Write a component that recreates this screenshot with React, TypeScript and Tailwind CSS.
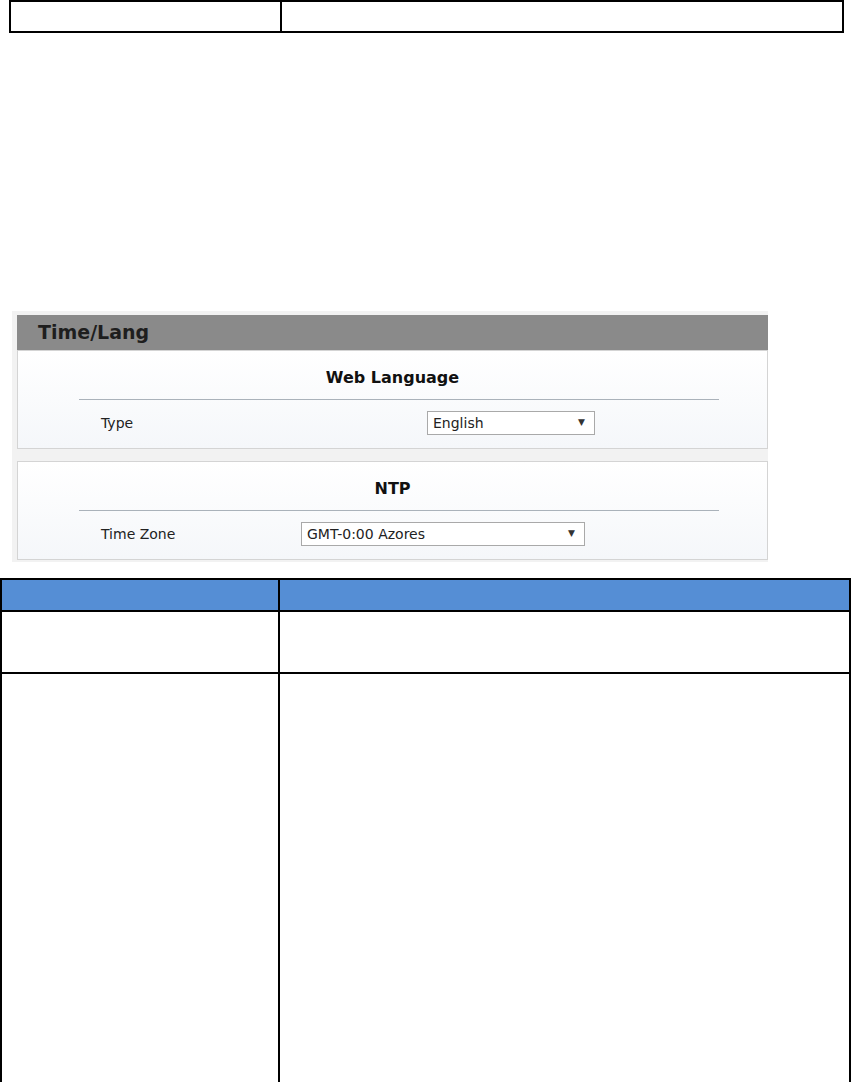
import React from "react";

function Select({ value, width }: { value: string; width: string }) {
  return (
    <div
      className={`flex h-[24px] items-center justify-between border border-[#a9a9a9] bg-white pl-[5px] pr-[9px] text-[14px] text-[#222] ${width}`}
    >
      <span>{value}</span>
      <span className="text-[9px] text-[#333]">▼</span>
    </div>
  );
}

function Section({ title, label, children }: { title: string; label: string; children: React.ReactNode }) {
  return (
    <div className="h-[99px] border border-[#d4d4d4] bg-gradient-to-b from-[#ffffff] to-[#f5f7fa] pt-[16px]">
      <div className="text-center text-[16px] font-bold leading-[22px] text-[#111]">{title}</div>
      <div className="mt-[10px] ml-[61px] h-px w-[640px] bg-[#aab2ba]" />
      <div className="mt-[11px] flex h-[24px] items-center pl-[83px] text-[14px] text-[#222]">
        <span className="w-[200px]">{label}</span>
        {children}
      </div>
    </div>
  );
}

export default function App() {
  return (
    <div className="relative h-[1082px] w-[851px] overflow-hidden bg-white" style={{ fontFamily: "'DejaVu Sans', Verdana, sans-serif" }}>
      {/* top table */}
      <div className="ml-[9px] grid h-[33px] w-[835px] grid-cols-[271px_1fr] border-2 border-black">
        <div className="border-r-2 border-black" />
        <div />
      </div>

      {/* screenshot */}
      <div className="ml-[12px] mt-[278px] w-[756px] bg-[#f2f2f2] pb-[2px] pl-[5px] pt-[4px]">
        <div className="flex h-[35px] items-center bg-[#8a8a8a] pl-[21px] text-[19px] font-bold text-[#1e1e1e]">
          Time/Lang
        </div>
        <Section title="Web Language" label="Type">
          <div className="ml-[126px]">
            <Select value="English" width="w-[168px]" />
          </div>
        </Section>
        <div className="h-[12px]" />
        <Section title="NTP" label="Time Zone">
          <Select value="GMT-0:00 Azores" width="w-[284px]" />
        </Section>
      </div>

      {/* bottom table */}
      <div className="mt-[16px] w-[851px] border-l-2 border-r-2 border-t-2 border-black">
        <div className="grid h-[32px] grid-cols-[278px_1fr] border-b-2 border-black bg-[#558ed5]">
          <div className="border-r-2 border-black" />
          <div />
        </div>
        <div className="grid h-[62px] grid-cols-[278px_1fr] border-b-2 border-black">
          <div className="border-r-2 border-black" />
          <div />
        </div>
        <div className="grid h-[420px] grid-cols-[278px_1fr]">
          <div className="border-r-2 border-black" />
          <div />
        </div>
      </div>
    </div>
  );
}
